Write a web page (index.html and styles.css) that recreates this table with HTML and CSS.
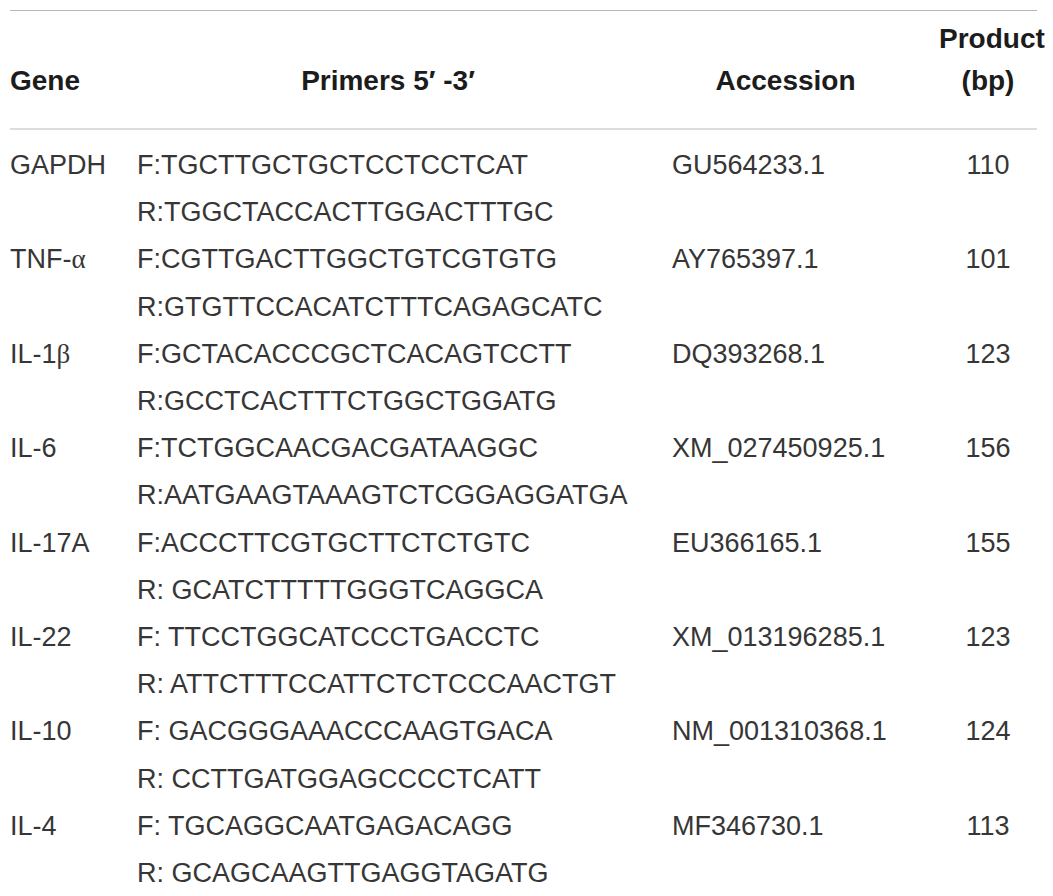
FILE: index.html
```html
<!DOCTYPE html>
<html lang="en">
<head>
<meta charset="utf-8">
<title>Primers</title>
<link rel="stylesheet" href="styles.css">
</head>
<body>
<table class="primers">
  <colgroup>
    <col class="c-gene">
    <col class="c-primer">
    <col class="c-acc">
    <col class="c-prod">
  </colgroup>
  <thead>
    <tr>
      <th class="h-gene">Gene</th>
      <th class="h-primer">Primers 5′ -3′</th>
      <th class="h-acc">Accession</th>
      <th class="h-prod">Product<br>(bp)</th>
    </tr>
  </thead>
  <tbody>
    <tr><td>GAPDH</td><td>F:TGCTTGCTGCTCCTCCTCAT<br>R:TGGCTACCACTTGGACTTTGC</td><td>GU564233.1</td><td class="prod">110</td></tr>
    <tr><td>TNF-<span class="greek">α</span></td><td>F:CGTTGACTTGGCTGTCGTGTG<br>R:GTGTTCCACATCTTTCAGAGCATC</td><td>AY765397.1</td><td class="prod">101</td></tr>
    <tr><td>IL-1<span class="greek">β</span></td><td>F:GCTACACCCGCTCACAGTCCTT<br>R:GCCTCACTTTCTGGCTGGATG</td><td>DQ393268.1</td><td class="prod">123</td></tr>
    <tr><td>IL-6</td><td>F:TCTGGCAACGACGATAAGGC<br>R:AATGAAGTAAAGTCTCGGAGGATGA</td><td>XM_027450925.1</td><td class="prod">156</td></tr>
    <tr><td>IL-17A</td><td>F:ACCCTTCGTGCTTCTCTGTC<br>R: GCATCTTTTTGGGTCAGGCA</td><td>EU366165.1</td><td class="prod">155</td></tr>
    <tr><td>IL-22</td><td>F: TTCCTGGCATCCCTGACCTC<br>R: ATTCTTTCCATTCTCTCCCAACTGT</td><td>XM_013196285.1</td><td class="prod">123</td></tr>
    <tr><td>IL-10</td><td>F: GACGGGAAACCCAAGTGACA<br>R: CCTTGATGGAGCCCCTCATT</td><td>NM_001310368.1</td><td class="prod">124</td></tr>
    <tr><td>IL-4</td><td>F: TGCAGGCAATGAGACAGG<br>R: GCAGCAAGTTGAGGTAGATG</td><td>MF346730.1</td><td class="prod">113</td></tr>
  </tbody>
</table>
</body>
</html>
```

FILE: styles.css
```css
html, body {
  margin: 0;
  padding: 0;
  background: #ffffff;
}

body {
  font-family: "Liberation Sans", Arial, Helvetica, sans-serif;
  color: #363636;
}

.primers {
  margin: 10px 0 0 10px;
  width: 1027px;
  table-layout: fixed;
  border-collapse: collapse;
  border-top: 1px solid #b8b8b8;
}

.c-gene { width: 127px; }
.c-primer { width: 535px; }
.c-acc { width: 260px; }
.c-prod { width: 105px; }

.primers th {
  font-size: 28px;
  font-weight: bold;
  color: #1c1c1c;
  line-height: 42px;
  vertical-align: bottom;
  padding: 7px 0 26px 0;
  border-bottom: 2px solid #dddddd;
  white-space: nowrap;
  overflow: visible;
}

.h-gene { text-align: left; }
.primers .h-primer { text-align: center; padding-right: 33px; }
.primers .h-acc { text-align: center; padding-right: 33px; }
.primers .h-prod { text-align: center; padding-left: 7px; }

.primers td {
  font-size: 27px;
  line-height: 47.2px;
  vertical-align: top;
  padding: 0;
  white-space: nowrap;
  overflow: visible;
}

.primers tbody tr:first-child td {
  padding-top: 12px;
}

.primers td.prod {
  text-align: center;
  padding-left: 7px;
}

.greek {
  font-family: "Liberation Serif", "Times New Roman", serif;
}
```
